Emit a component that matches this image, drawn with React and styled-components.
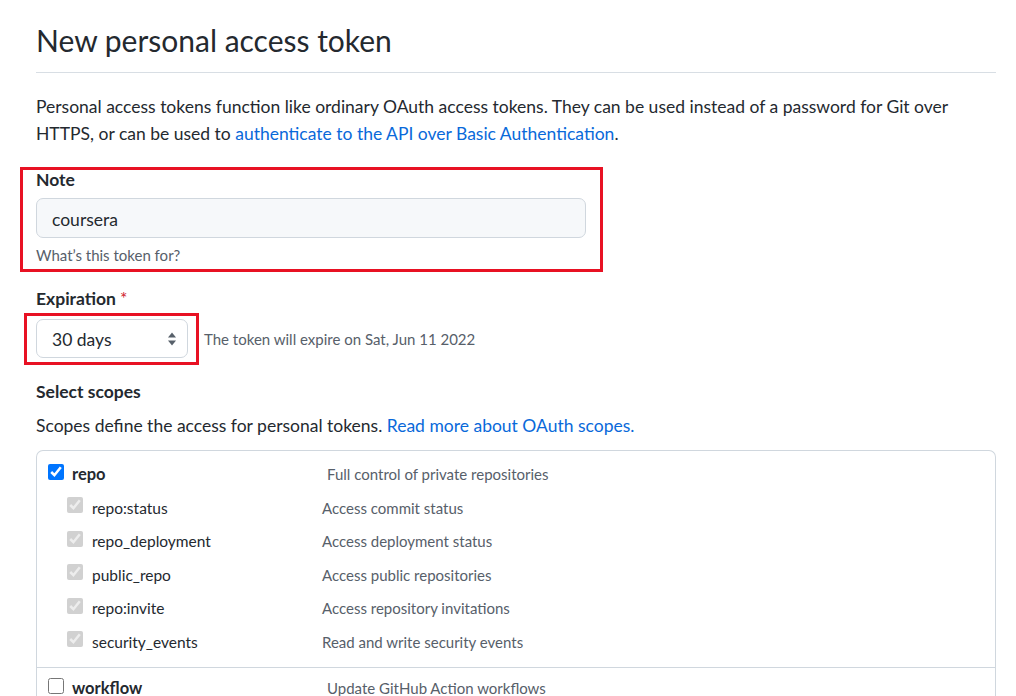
import React from "react";
import styled, { createGlobalStyle } from "styled-components";

const Global = createGlobalStyle`
  html, body { margin: 0; padding: 0; background: #ffffff; }
  body {
    font-family: Lato, "Liberation Sans", sans-serif;
    color: #24292f;
    -webkit-font-smoothing: antialiased;
  }
`;

const Page = styled.div`
  width: 960px;
  padding: 22px 0 0 36px;
`;

const Subhead = styled.div`
  border-bottom: 1px solid #d8dee4;
  padding-bottom: 12px;
`;

const Title = styled.h2`
  margin: 0;
  font-size: 30px;
  font-weight: 400;
  line-height: 37.5px;
`;

const Lead = styled.p`
  margin: 20px 0 0;
  font-size: 17.5px;
  line-height: 27px;
`;

const Link = styled.a`
  color: #0969da;
  text-decoration: none;
`;

const Highlight = styled.div`
  border: 3px solid #e81123;
  box-sizing: border-box;
  width: ${(p) => p.$w}px;
  margin-left: ${(p) => -p.$inset}px;
  margin-top: ${(p) => p.$mt || 0}px;
  padding: ${(p) => p.$pad};
`;

const Label = styled.div`
  font-size: 17.5px;
  font-weight: 700;
  line-height: 20px;
  margin-top: ${(p) => p.$mt || 0}px;
`;

const Required = styled.span`
  color: #cf222e;
  font-weight: 400;
  margin-left: 4px;
`;

const TextInput = styled.div`
  box-sizing: border-box;
  width: 550px;
  height: 40px;
  margin-top: 8px;
  background: #f6f8fa;
  border: 1px solid #d0d7de;
  border-radius: 7px;
  display: flex;
  align-items: center;
  padding: 3px 0 0 15px;
  font-size: 17.5px;
  color: #24292f;
`;

const Hint = styled.div`
  margin-top: 7px;
  font-size: 15px;
  line-height: 20px;
  color: #57606a;
`;

const ExpRow = styled.div`
  display: flex;
  align-items: center;
  margin-top: 4px;
`;

const Select = styled.div`
  box-sizing: border-box;
  width: 152px;
  height: 39px;
  border: 1px solid #d0d7de;
  border-radius: 7px;
  background: #ffffff;
  display: flex;
  align-items: center;
  justify-content: space-between;
  padding: 2px 10px 0 15px;
  font-size: 17.5px;
`;

const ExpNote = styled.span`
  margin-left: 5px;
  font-size: 15px;
  color: #57606a;
`;

const ScopesText = styled.p`
  margin: 10px 0 0;
  font-size: 17.5px;
  line-height: 27px;
`;

const ScopeBox = styled.div`
  margin-top: 11px;
  border: 1px solid #d0d7de;
  border-bottom: none;
  border-radius: 7px 7px 0 0;
`;

const Group = styled.div`
  padding: ${(p) => p.$pad};
  border-top: ${(p) => (p.$sep ? "1px solid #d0d7de" : "none")};
`;

const Row = styled.div`
  display: flex;
  align-items: center;
  height: 33.5px;
  padding-left: ${(p) => (p.$sub ? 30 : 11)}px;
`;

const Check = styled.input`
  width: 16px;
  height: 16px;
  margin: 0 0 5px 0;
  accent-color: #0075ff;
  flex: none;
`;

const ScopeName = styled.span`
  width: ${(p) => p.$w}px;
  margin-left: ${(p) => (p.$sub ? 9 : 8)}px;
  font-size: ${(p) => (p.$sub ? 15.5 : 16.5)}px;
  font-weight: ${(p) => (p.$sub ? 400 : 700)};
`;

const ScopeDesc = styled.span`
  font-size: 15px;
  color: #57606a;
`;

const Arrows = () => (
  <svg width="10" height="16" viewBox="0 0 10 16">
    <path d="M5 1.5 L9 6.5 H1 Z" fill="#57606a" />
    <path d="M5 14.5 L9 9.5 H1 Z" fill="#57606a" />
  </svg>
);

const subs = [
  ["repo:status", "Access commit status"],
  ["repo_deployment", "Access deployment status"],
  ["public_repo", "Access public repositories"],
  ["repo:invite", "Access repository invitations"],
  ["security_events", "Read and write security events"],
];

export default function App() {
  return (
    <Page>
      <Global />
      <Subhead>
        <Title>New personal access token</Title>
      </Subhead>
      <Lead>
        Personal access tokens function like ordinary OAuth access tokens. They can be used instead of a password for Git over
        HTTPS, or can be used to <Link>authenticate to the API over Basic Authentication</Link>.
      </Lead>

      <Highlight $w={583} $inset={16} $mt={20} $pad="0 0 4px 13px">
        <Label>Note</Label>
        <TextInput>coursera</TextInput>
        <Hint>What’s this token for?</Hint>
      </Highlight>

      <Label $mt={17}>
        Expiration<Required>*</Required>
      </Label>
      <ExpRow>
        <Highlight $w={175} $inset={12} $pad="3px 8px 4px 9px">
          <Select>
            <span>30 days</span>
            <Arrows />
          </Select>
        </Highlight>
        <ExpNote>The token will expire on Sat, Jun 11 2022</ExpNote>
      </ExpRow>

      <Label $mt={17}>Select scopes</Label>
      <ScopesText>
        Scopes define the access for personal tokens. <Link>Read more about OAuth scopes.</Link>
      </ScopesText>

      <ScopeBox>
        <Group $pad="7px 0 8px">
          <Row>
            <Check type="checkbox" defaultChecked />
            <ScopeName $w={255}>repo</ScopeName>
            <ScopeDesc>Full control of private repositories</ScopeDesc>
          </Row>
          {subs.map(([n, d]) => (
            <Row $sub key={n}>
              <Check type="checkbox" defaultChecked disabled />
              <ScopeName $sub $w={230}>{n}</ScopeName>
              <ScopeDesc>{d}</ScopeDesc>
            </Row>
          ))}
        </Group>
        <Group $sep $pad="4px 0 0">
          <Row>
            <Check type="checkbox" />
            <ScopeName $w={255}>workflow</ScopeName>
            <ScopeDesc>Update GitHub Action workflows</ScopeDesc>
          </Row>
        </Group>
      </ScopeBox>
    </Page>
  );
}
